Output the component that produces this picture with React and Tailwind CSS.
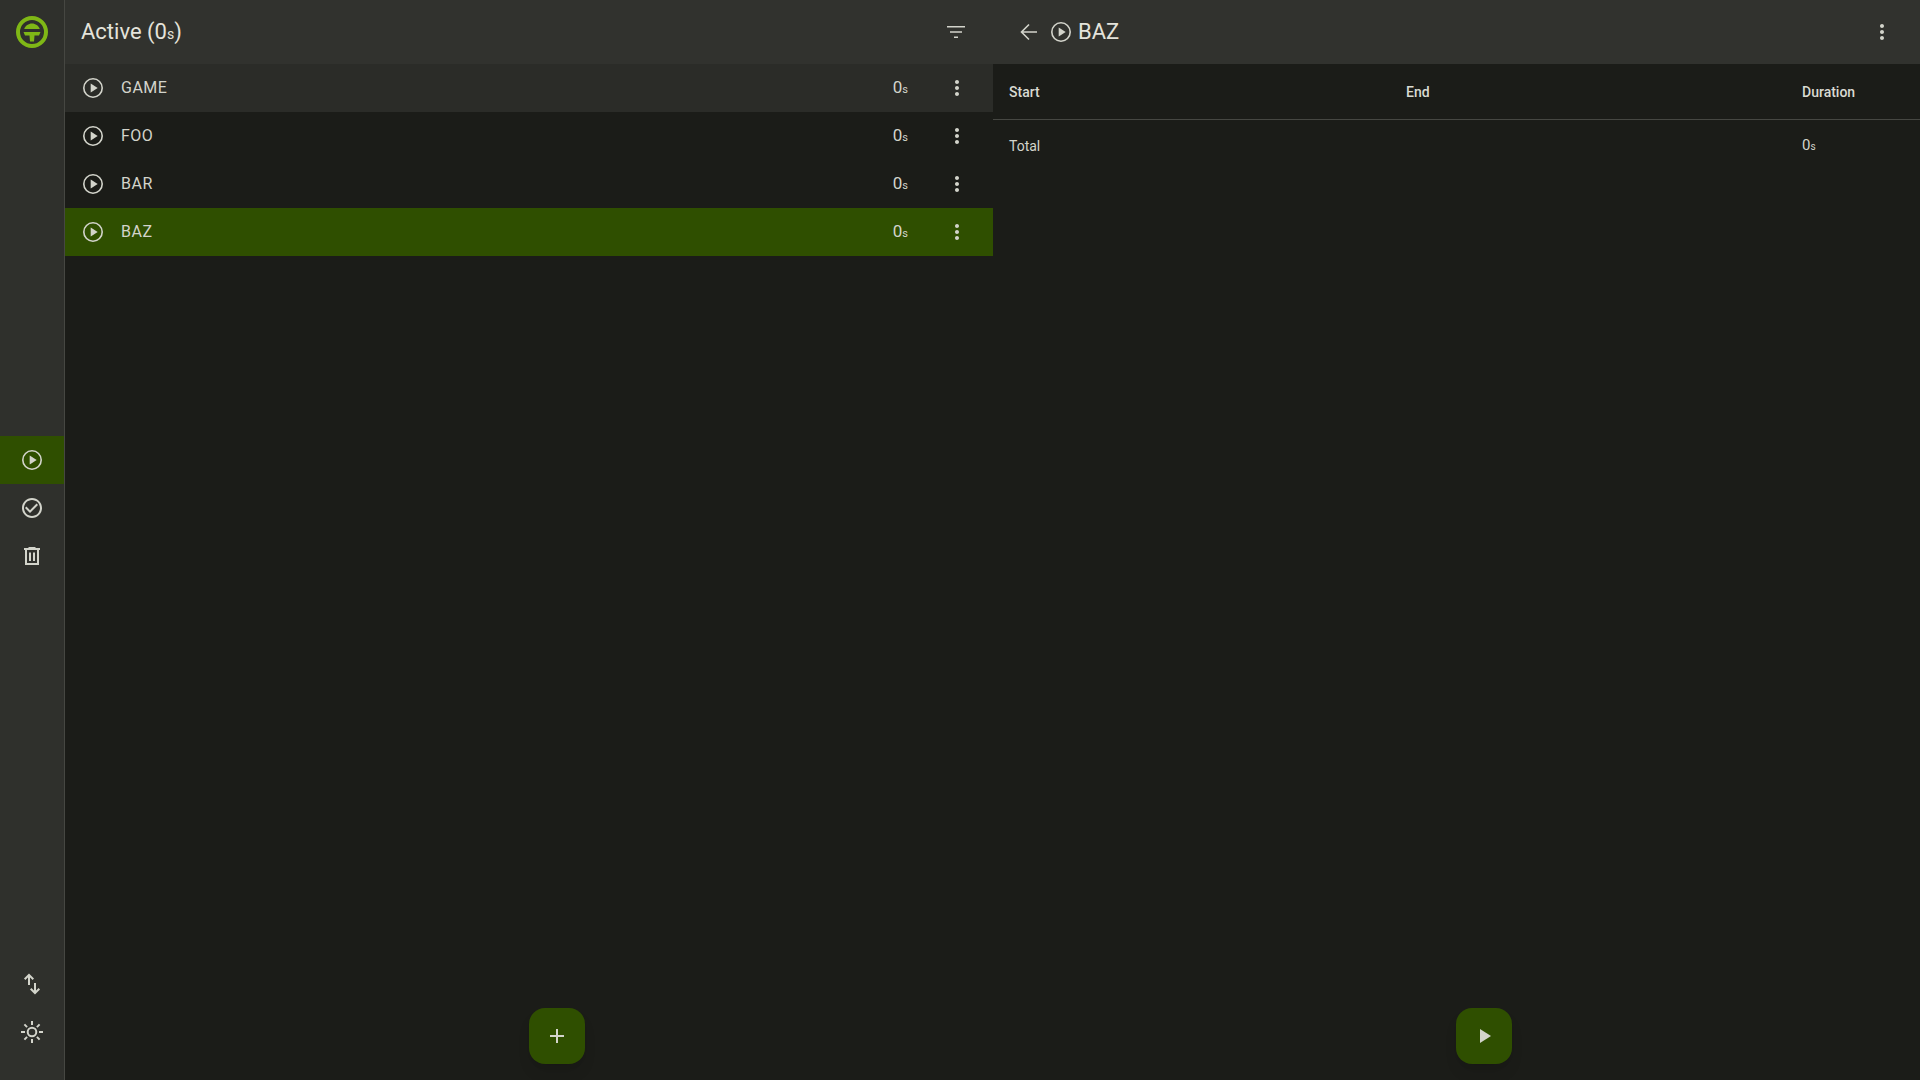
import React from 'react';
import { MdCheckCircleOutline, MdMoreVert, MdAdd, MdPlayArrow } from 'react-icons/md';

const tasks = ['GAME', 'FOO', 'BAR', 'BAZ'];

const Logo = () => (
  <svg width="32" height="32" viewBox="0 0 32 32" fill="#7fb716">
    <path
      fillRule="evenodd"
      d="M16 0a16 16 0 1 0 0 32a16 16 0 1 0 0-32zM16 4a12 12 0 1 1 0 24a12 12 0 1 1 0-24z"
    />
    <path d="M16 7.500c-3.600 0-6.600 2.300-7.800 5.500h15.600c-1.200-3.200-4.200-5.500-7.800-5.500z" />
    <path d="M7.500 16h17l-1.500 3.500h-4.500l-.5 6h-4l-.5-6H9z" />
  </svg>
);

const PlayCircle = ({ className = '' }) => (
  <svg width="24" height="24" viewBox="0 0 24 24" className={`shrink-0 ${className}`}>
    <circle cx="12" cy="12" r="9.200" fill="none" stroke="currentColor" strokeWidth="1.600" />
    <path d="M9.700 7.600l7 4.400-7 4.400z" fill="currentColor" />
  </svg>
);

const TrashIcon = () => (
  <svg width="24" height="24" viewBox="0 0 24 24" fill="currentColor">
    <path d="M9 3h6l1 1h4v2H4V4h4z" />
    <path fillRule="evenodd" d="M5 6h14v15H5zM7 6v13h10V6z" />
    <path d="M9 8.500h2v8.500H9zM13 8.500h2v8.500h-2z" />
  </svg>
);

const SwapIcon = () => (
  <svg width="24" height="24" viewBox="0 0 24 24" fill="none" stroke="currentColor" strokeWidth="2">
    <path d="M9 13V3M4.700 7.300 9 3l4.300 4.300" />
    <path d="M15 11v10M10.700 16.700 15 21l4.300-4.300" />
  </svg>
);

const SunIcon = () => (
  <svg width="24" height="24" viewBox="0 0 24 24" fill="none" stroke="currentColor" strokeWidth="2">
    <circle cx="12" cy="12" r="4.300" />
    <path d="M12 1v4M12 19v4M1 12h4M19 12h4M4.400 4.400l2.700 2.700M16.900 16.900l2.700 2.700M4.400 19.600l2.700-2.700M16.900 7.100l2.700-2.700" />
  </svg>
);

const FilterIcon = () => (
  <svg width="24" height="24" viewBox="0 0 24 24" fill="none" stroke="currentColor" strokeWidth="1.500">
    <path d="M3 6.750h18M6 12h12M10 17.250h4" />
  </svg>
);

const BackIcon = () => (
  <svg width="24" height="24" viewBox="0 0 24 24" fill="none" stroke="currentColor" strokeWidth="1.600">
    <path d="M20 12H5.500M12 4.500 4.500 12l7.500 7.500" />
  </svg>
);

// time value with the small unit after it
const Time = ({ className = '', unitClass = 'text-[11px]' }) => (
  <span className={className}>
    0<span className={unitClass}>s</span>
  </span>
);

const NavItem = ({ active, children }) => (
  <div className={`flex h-12 items-center justify-center ${active ? 'bg-[#2f4f00]' : ''}`}>
    {children}
  </div>
);

const Sidebar = () => (
  <aside className="flex h-full w-[65px] shrink-0 flex-col border-r border-[#464742] bg-[#2f302c] text-[#d3d4cb]">
    <div className="flex h-16 items-center justify-center">
      <Logo />
    </div>
    <div className="mt-[372px]">
      <NavItem active>
        <PlayCircle />
      </NavItem>
      <NavItem>
        <MdCheckCircleOutline size={24} />
      </NavItem>
      <NavItem>
        <TrashIcon />
      </NavItem>
    </div>
    <div className="mt-auto pb-6">
      <NavItem>
        <SwapIcon />
      </NavItem>
      <NavItem>
        <SunIcon />
      </NavItem>
    </div>
  </aside>
);

const TaskRow = ({ name, hovered, selected }) => (
  <div
    className={`flex h-12 items-center pl-4 pr-6 text-[#d3d4cb] ${
      selected ? 'bg-[#2f4f00]' : hovered ? 'bg-[#2b2c28]' : ''
    }`}
  >
    <PlayCircle />
    <span className="ml-4 flex-1 text-base tracking-[0.5px]">{name}</span>
    <Time className="mr-[37px] pb-px text-[17px]" />
    <MdMoreVert size={24} />
  </div>
);

const ListPanel = () => (
  <section className="relative flex h-full w-[928px] shrink-0 flex-col">
    <header className="flex h-16 shrink-0 items-center justify-between bg-[#31322e] pl-4 pr-[25px] text-[#d3d4cb]">
      <h1 className="pb-0.5 text-[22px] font-normal text-[#e4e3db]">
        Active (<Time unitClass="text-sm" />)
      </h1>
      <FilterIcon />
    </header>
    <div>
      {tasks.map((name) => (
        <TaskRow key={name} name={name} hovered={name === 'GAME'} selected={name === 'BAZ'} />
      ))}
    </div>
    <button className="absolute bottom-4 left-1/2 flex h-14 w-14 items-center justify-center rounded-2xl bg-[#2f4f00] text-[#d3d4cb] shadow-lg">
      <MdAdd size={24} />
    </button>
  </section>
);

const DetailPanel = () => (
  <section className="relative flex h-full min-w-0 flex-1 flex-col">
    <header className="flex h-16 shrink-0 items-center bg-[#31322e] pl-6 pr-[26px] text-[#d3d4cb]">
      <BackIcon />
      <PlayCircle className="ml-2" />
      <span className="ml-[5px] flex-1 pb-0.5 text-[22px] text-[#e4e3db]">BAZ</span>
      <MdMoreVert size={24} />
    </header>
    <div className="grid h-14 grid-cols-[397px_396px_1fr] items-center border-b border-[#464742] text-sm font-medium text-[#d9dad2]">
      <div className="px-4">Start</div>
      <div className="px-4">End</div>
      <div className="px-4">Duration</div>
    </div>
    <div className="grid h-[51px] grid-cols-[397px_396px_1fr] items-center text-sm text-[#d3d4cb]">
      <div className="px-4">Total</div>
      <div className="px-4" />
      <div className="px-4">
        <Time className="text-[15px]" unitClass="text-[10px]" />
      </div>
    </div>
    <button className="absolute bottom-4 left-[463px] flex h-14 w-14 items-center justify-center rounded-2xl bg-[#2f4f00] text-[#d3d4cb] shadow-lg">
      <MdPlayArrow size={24} />
    </button>
  </section>
);

const App = () => (
  <div className="flex h-screen w-full overflow-hidden bg-[#1b1c18] font-['Roboto',sans-serif]">
    <Sidebar />
    <ListPanel />
    <DetailPanel />
  </div>
);

export default App;
